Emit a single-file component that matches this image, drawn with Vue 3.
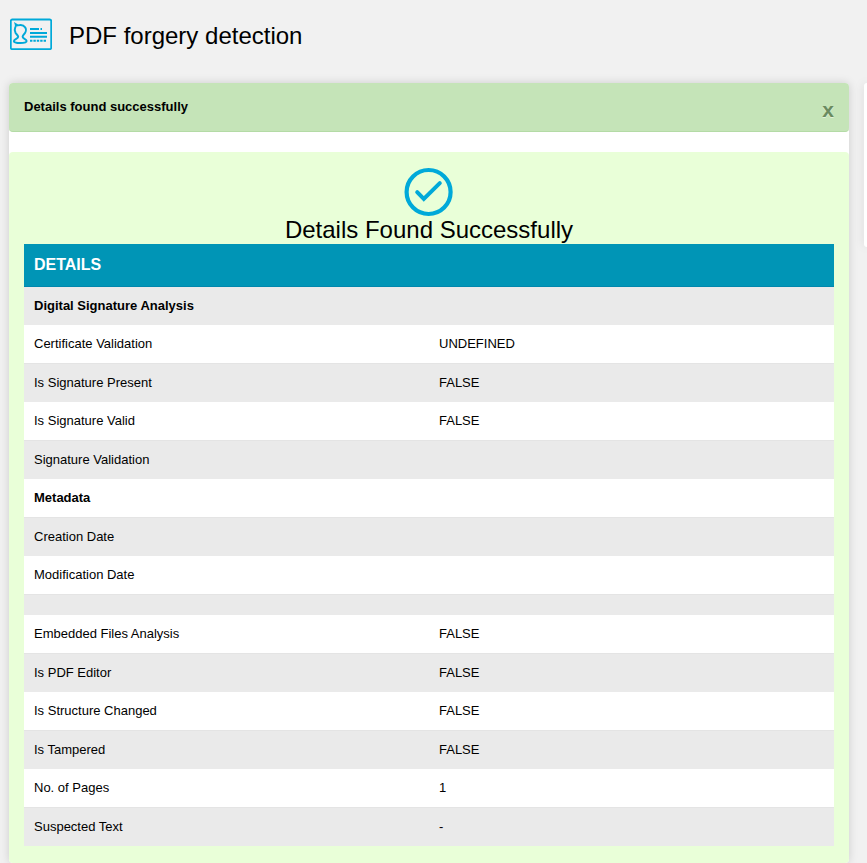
<template>
  <div class="page">
    <header class="page-header">
      <svg class="header-icon" viewBox="0 0 42 32" fill="none" stroke="#00a9d9" aria-hidden="true">
        <rect x="0.8" y="1.5" width="40.4" height="29.7" rx="1.5" stroke-width="1.8" />
        <path
          d="M5.2 9.6C6.2 8.4 6 7.2 5.7 6.2L7.6 7.4C10.5 6.6 13.8 7.2 15 9.2C16.4 10.6 16 13.4 15 15C14 16.6 12.8 17.2 12.6 18.8C12.6 20.8 16.6 20.8 16.6 23C16.6 24.7 14.5 25 10.4 25C6 25 3.9 24.7 3.9 23.2C3.9 20.9 8.2 20.8 8.2 18.8C8 17.2 6.6 16.6 5.6 15C4.6 13.2 4.4 11.2 5.2 9.6Z"
          stroke-width="2"
        />
        <path d="M20 11H29M30.5 11H32M20 15H37M20 18.8H37" stroke-width="1.9" />
        <path d="M20 22.7H37" stroke-width="1.9" stroke-dasharray="2.4 1" />
      </svg>
      <h1>PDF forgery detection</h1>
    </header>

    <div class="columns">
      <main class="card">
        <div v-if="showAlert" class="alert" role="status">
          <strong>Details found successfully</strong>
          <button class="close" type="button" @click="showAlert = false">x</button>
        </div>

        <section class="result">
          <svg class="check" viewBox="0 0 50 50" fill="none" stroke="#00a9d9" aria-hidden="true">
            <circle cx="24.6" cy="25" r="22" stroke-width="4.2" />
            <path d="M13.2 25.2L19.8 32L35.8 16.2" stroke-width="4" stroke-linecap="round" />
          </svg>
          <h2>Details Found Successfully</h2>

          <table class="details">
            <thead>
              <tr>
                <th colspan="2" scope="col">DETAILS</th>
              </tr>
            </thead>
            <tbody>
              <tr v-for="(row, index) in rows" :key="index">
                <th v-if="row.heading" colspan="2" scope="rowgroup">{{ row.heading }}</th>
                <template v-else>
                  <td>{{ row.label }}</td>
                  <td>{{ row.value }}</td>
                </template>
              </tr>
            </tbody>
          </table>
        </section>
      </main>

      <aside class="card side-card"></aside>
    </div>
  </div>
</template>

<script setup>
import { ref } from "vue";

const showAlert = ref(true);

const rows = [
  { heading: "Digital Signature Analysis" },
  { label: "Certificate Validation", value: "UNDEFINED" },
  { label: "Is Signature Present", value: "FALSE" },
  { label: "Is Signature Valid", value: "FALSE" },
  { label: "Signature Validation", value: "" },
  { heading: "Metadata" },
  { label: "Creation Date", value: "" },
  { label: "Modification Date", value: "" },
  { label: "", value: "" },
  { label: "Embedded Files Analysis", value: "FALSE" },
  { label: "Is PDF Editor", value: "FALSE" },
  { label: "Is Structure Changed", value: "FALSE" },
  { label: "Is Tampered", value: "FALSE" },
  { label: "No. of Pages", value: "1" },
  { label: "Suspected Text", value: "-" },
];
</script>

<style>
body {
  margin: 0;
  background: #f1f1f1;
}
</style>

<style scoped>
.page {
  font-family: Arial, "Liberation Sans", sans-serif;
  font-size: 13px;
  line-height: 18px;
  color: #000;
  overflow: hidden;
}
.page-header {
  display: flex;
  align-items: flex-start;
  gap: 17px;
  padding: 18px 10px 29px;
}
.header-icon {
  width: 42px;
  height: 32px;
}
h1,
h2 {
  margin: 0;
  font-size: 24px;
  font-weight: 400;
}
h1 {
  line-height: 36px;
}
h2 {
  line-height: 26px;
  padding-bottom: 1px;
}
.columns {
  display: grid;
  grid-template-columns: minmax(0, 1fr) 3px;
  align-items: start;
  gap: 15px;
  padding-left: 9px;
}
.card {
  background: #fff;
  border-radius: 4px;
  box-shadow: 0 0 10px rgba(0, 0, 0, 0.15);
}
.side-card {
  height: 164px;
  border-radius: 4px 0 0 4px;
}
.alert {
  display: flex;
  justify-content: space-between;
  padding: 14px 15px;
  margin-bottom: 20px;
  background: #c5e4b8;
  border-bottom: 1px solid #b4dba6;
  border-radius: 4px;
}
.alert strong {
  line-height: 20px;
}
.close {
  padding: 5px 0 0;
  border: none;
  background: none;
  font-family: inherit;
  font-size: 21px;
  font-weight: 700;
  line-height: 15px;
  color: #6a8b60;
  text-shadow: 0 1px 0 #e2f1db;
  cursor: pointer;
}
.result {
  padding: 15px 15px 17px;
  background: #e9ffd8;
  border-radius: 4px;
  text-align: center;
}
.check {
  display: block;
  width: 50px;
  height: 50px;
  margin: 0 auto;
}
.details {
  width: 100%;
  table-layout: fixed;
  border-collapse: separate;
  border-spacing: 0;
  background: #fff;
  text-align: left;
}
.details th,
.details td {
  padding: 10px;
}
.details thead th {
  background: #0095b6;
  border-bottom: 1px solid #0087ad;
  color: #fff;
  font-size: 16px;
  line-height: 22px;
}
.details tbody tr:nth-child(odd) {
  background: #eaeaea;
}
.details tbody tr:nth-child(even) > * {
  border-bottom: 1px solid #e4e4e4;
}
</style>
